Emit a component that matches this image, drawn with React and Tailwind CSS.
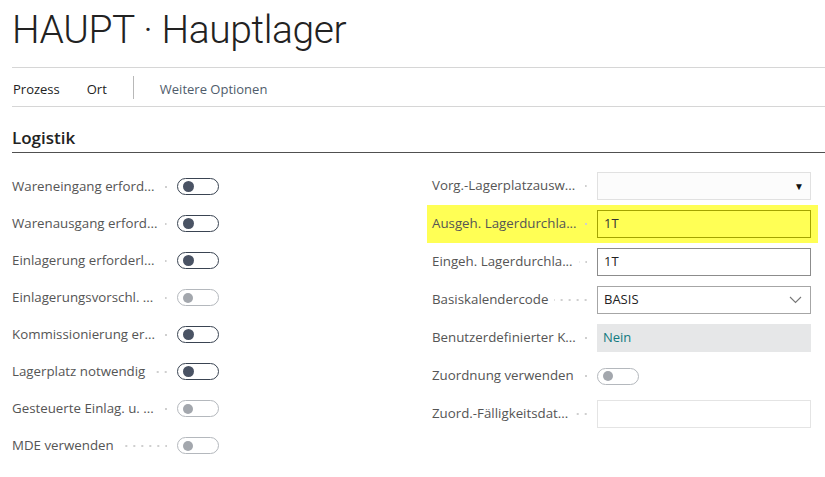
import React from "react";

const font = { fontFamily: '"Open Sans", "Noto Sans", Arial, sans-serif' };

function Dots() {
  return (
    <span className="flex-1 min-w-0 h-[2px] ml-[6px] mr-[10px] bg-[linear-gradient(to_left,#cfcfcf_2px,transparent_2px)] bg-[length:8px_2px] bg-repeat-x bg-[position:right_center]" />
  );
}

function Toggle({ disabled }) {
  return disabled ? (
    <div className="w-[42px] h-[17px] rounded-full border border-[#b4b8bd] flex items-center pl-[5px] shrink-0">
      <div className="w-[10px] h-[10px] rounded-full bg-[#a3a7ad]" />
    </div>
  ) : (
    <div className="w-[42px] h-[17px] rounded-full border-[1.5px] border-[#3a4452] flex items-center pl-[5px] shrink-0">
      <div className="w-[11px] h-[11px] rounded-full bg-[#4a5364]" />
    </div>
  );
}

function LeftRow({ label, disabled }) {
  return (
    <div className="h-[37px] flex items-center">
      <div className="w-[165px] flex items-center">
        <span className="text-[13.3px] text-[#555] whitespace-nowrap">{label}</span>
        <Dots />
      </div>
      <Toggle disabled={disabled} />
    </div>
  );
}

function RightRow({ label, children, highlight }) {
  return (
    <div className={`h-[38px] flex items-center pl-[5px] pr-[7px] ${highlight ? "bg-[#ffff55]" : ""}`}>
      <div className="w-[165px] flex items-center">
        <span className="text-[13.3px] text-[#555] whitespace-nowrap">{label}</span>
        <Dots />
      </div>
      <div className="w-[214px] flex items-center">{children}</div>
    </div>
  );
}

export default function App() {
  return (
    <div className="w-[825px] h-[477px] bg-white pl-3 overflow-hidden" style={font}>
      <div className="h-[68px] border-b border-[#d6d6d6] flex items-start">
        <h1
          className="text-[39px] font-light text-[#222] leading-none mt-[11px] tracking-[-0.4px]"
          style={{ fontFamily: 'Roboto, "Open Sans", Arial, sans-serif' }}
        >
          HAUPT · Hauptlager
        </h1>
      </div>
      <div className="h-[39px] border-b border-[#d6d6d6] flex items-center pt-[5px] text-[13px] text-[#222]">
        <span className="ml-[1px]">Prozess</span>
        <span className="ml-[27px]">Ort</span>
        <span className="ml-[26px] w-px h-[23px] bg-[#b8b8b8] -mt-[5px]" />
        <span className="ml-[26px] text-[#505c6b]">Weitere Optionen</span>
      </div>
      <div className="h-[46px] border-b border-[#505050] flex items-end pb-[2px]">
        <span className="text-[17px] font-semibold text-[#222]">Logistik</span>
      </div>
      <div className="flex mt-[15px]">
        <div className="w-[415px]">
          <LeftRow label="Wareneingang erford..." />
          <LeftRow label="Warenausgang erford..." />
          <LeftRow label="Einlagerung erforderl..." />
          <LeftRow label="Einlagerungsvorschl. ..." disabled />
          <LeftRow label="Kommissionierung er..." />
          <LeftRow label="Lagerplatz notwendig" />
          <LeftRow label="Gesteuerte Einlag. u. ..." disabled />
          <LeftRow label="MDE verwenden" disabled />
        </div>
        <div className="w-[391px] -mt-[1px]">
          <RightRow label="Vorg.-Lagerplatzausw...">
            <div className="w-full h-[28px] border border-[#e1e1e1] bg-[#fcfcfc] flex items-center justify-end pr-[6px]">
              <span className="text-[10px] text-[#111]">▼</span>
            </div>
          </RightRow>
          <RightRow label="Ausgeh. Lagerdurchla..." highlight>
            <div className="w-full h-[28px] border border-[#a3a300] bg-[#ffff55] flex items-center px-[6px] text-[13px] text-[#333]">
              1T
            </div>
          </RightRow>
          <RightRow label="Eingeh. Lagerdurchla...">
            <div className="w-full h-[28px] border border-[#8c8c8c] bg-white flex items-center px-[6px] text-[13px] text-[#222]">
              1T
            </div>
          </RightRow>
          <RightRow label="Basiskalendercode">
            <div className="w-full h-[28px] border border-[#a6a6a6] bg-white flex items-center justify-between pl-[6px] pr-[8px] text-[13px] text-[#222]">
              <span>BASIS</span>
              <svg width="13" height="8" viewBox="0 0 13 8" fill="none">
                <path d="M1 1l5.5 5.5L12 1" stroke="#777" strokeWidth="1.1" />
              </svg>
            </div>
          </RightRow>
          <RightRow label="Benutzerdefinierter K...">
            <div className="w-full h-[28px] bg-[#e6e7e8] flex items-center px-[6px] text-[13px] text-[#127a80]">
              Nein
            </div>
          </RightRow>
          <RightRow label="Zuordnung verwenden">
            <Toggle disabled />
          </RightRow>
          <RightRow label="Zuord.-Fälligkeitsdat...">
            <div className="w-full h-[28px] border border-[#e4e4e4] bg-white" />
          </RightRow>
        </div>
      </div>
    </div>
  );
}
